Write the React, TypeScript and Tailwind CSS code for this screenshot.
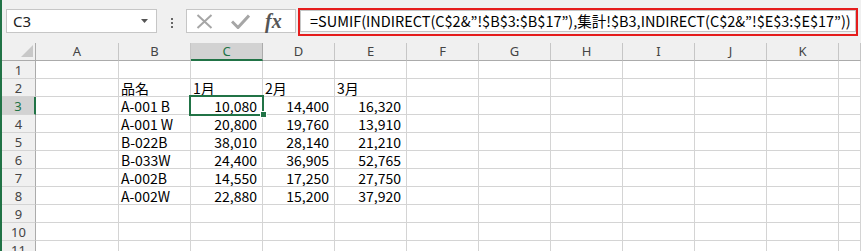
import React from "react";

const cols = ["A", "B", "C", "D", "E", "F", "G", "H", "I", "J", "K", ""];
const data: Record<number, string[]> = {
  2: ["", "品名", "1月", "2月", "3月"],
  3: ["", "A-001 B", "10,080", "14,400", "16,320"],
  4: ["", "A-001 W", "20,800", "19,760", "13,910"],
  5: ["", "B-022B", "38,010", "28,140", "21,210"],
  6: ["", "B-033W", "24,400", "36,905", "52,765"],
  7: ["", "A-002B", "14,550", "17,250", "27,750"],
  8: ["", "A-002W", "22,880", "15,200", "37,920"],
};

const cellFont = { fontFamily: '"Noto Sans CJK JP", "Noto Sans", sans-serif' };
const hdrFont = { fontFamily: '"Noto Sans", "Open Sans", sans-serif' };

export default function App() {
  const rows = Array.from({ length: 11 }, (_, i) => i + 1);
  return (
    <div className="relative w-[861px] h-[251px] overflow-hidden bg-[#f0f0f0] border-l-2 border-[#217346]">
      {/* toolbar */}
      <div className="h-[43px] flex items-start pt-[8px] pl-[4px]">
        <div className="mt-[1px] w-[151px] h-[24px] bg-white border border-[#c6c6c6] flex items-center justify-between pl-[6px] pr-[7px]">
          <span className="text-[15px] text-[#222] leading-none" style={hdrFont}>C3</span>
          <svg width="8" height="5" viewBox="0 0 8 5"><path d="M0 0h7L3.5 4z" fill="#555" /></svg>
        </div>
        <div className="mt-[10px] ml-[14px] flex flex-col gap-[2px]">
          <div className="w-[2px] h-[2px] bg-[#666]" />
          <div className="w-[2px] h-[2px] bg-[#666]" />
          <div className="w-[2px] h-[2px] bg-[#666]" />
        </div>
        <div className="mt-[1px] ml-[13px] w-[110px] h-[24px] bg-white border border-[#c6c6c6] flex items-center">
          <svg className="ml-[9px]" width="17" height="15" viewBox="0 0 17 15">
            <path d="M1.5 1L15.5 14M15.5 1L1.5 14" stroke="#a6a6a6" strokeWidth="2" />
          </svg>
          <svg className="ml-[18px]" width="19" height="15" viewBox="0 0 19 15">
            <path d="M1 7.5L7 13.5L18 1.5" stroke="#a6a6a6" strokeWidth="3" fill="none" />
          </svg>
          <span className="ml-[15px] text-[20px] italic font-bold text-[#555] leading-none" style={{ fontFamily: '"Liberation Serif", serif' }}>fx</span>
        </div>
        <div className="ml-[2px] w-[560px] h-[28px] border-2 border-[#e51c1c] pb-[2px]">
          <div className="h-full bg-white border border-[#c6c6c6] flex items-center pl-[9px] overflow-hidden">
            <span className="text-[14.5px] text-black leading-none whitespace-nowrap" style={cellFont}>
              =SUMIF(INDIRECT(C$2&amp;”!$B$3:$B$17”),集計!$B3,INDIRECT(C$2&amp;”!$E$3:$E$17”))
            </span>
          </div>
        </div>
      </div>
      {/* sheet */}
      <div className="grid grid-cols-[34px_83px_repeat(10,72px)_1fr]">
        {/* header row */}
        <div className="h-[18px] border-r border-b border-[#ababab] relative">
          <svg className="absolute left-[19px] top-[2px]" width="12" height="12" viewBox="0 0 12 12"><path d="M12 0V12H0z" fill="#c8c8c8" /></svg>
        </div>
        {cols.map((c, i) => (
          <div
            key={i}
            className={
              c === "C"
                ? "h-[18px] bg-[#d2d2d2] border-r border-[#ababab] border-b-2 border-b-[#217346] flex items-center justify-center text-[13px] text-[#217346]"
                : "h-[18px] border-r border-b border-[#c6c6c6] border-b-[#ababab] flex items-center justify-center text-[13px] text-[#444]"
            }
            style={hdrFont}
          >
            <span className="leading-none">{c}</span>
          </div>
        ))}
        {rows.map((r) => (
          <React.Fragment key={r}>
            <div
              className={
                r === 3
                  ? "h-[18px] bg-[#d2d2d2] border-b border-[#d4d4d4] border-r-2 border-r-[#217346] flex items-center justify-center text-[13px] text-[#217346] pt-[2px]"
                  : "h-[18px] border-b border-[#d4d4d4] border-r border-r-[#ababab] flex items-center justify-center text-[13px] text-[#444] pt-[2px]"
              }
              style={hdrFont}
            >
              <span className="leading-none">{r}</span>
            </div>
            {cols.map((_, ci) => {
              const v = data[r]?.[ci] ?? "";
              const isNum = r >= 3 && ci >= 2 && ci <= 4;
              return (
                <div
                  key={ci}
                  className={
                    "h-[18px] border-r border-b border-[#d4d4d4] bg-white flex items-end whitespace-nowrap text-[14px] leading-[16px] text-black overflow-hidden " +
                    (isNum ? "justify-end pr-[5px]" : "justify-start pl-[2px]")
                  }
                  style={cellFont}
                >
                  {v}
                </div>
              );
            })}
          </React.Fragment>
        ))}
      </div>
      {/* selection */}
      <div className="absolute left-[187px] top-[95px] w-[75px] h-[21px] border-2 border-[#217346]" />
      <div className="absolute left-[258px] top-[111px] w-[7px] h-[7px] bg-[#217346] border border-white" />
    </div>
  );
}
